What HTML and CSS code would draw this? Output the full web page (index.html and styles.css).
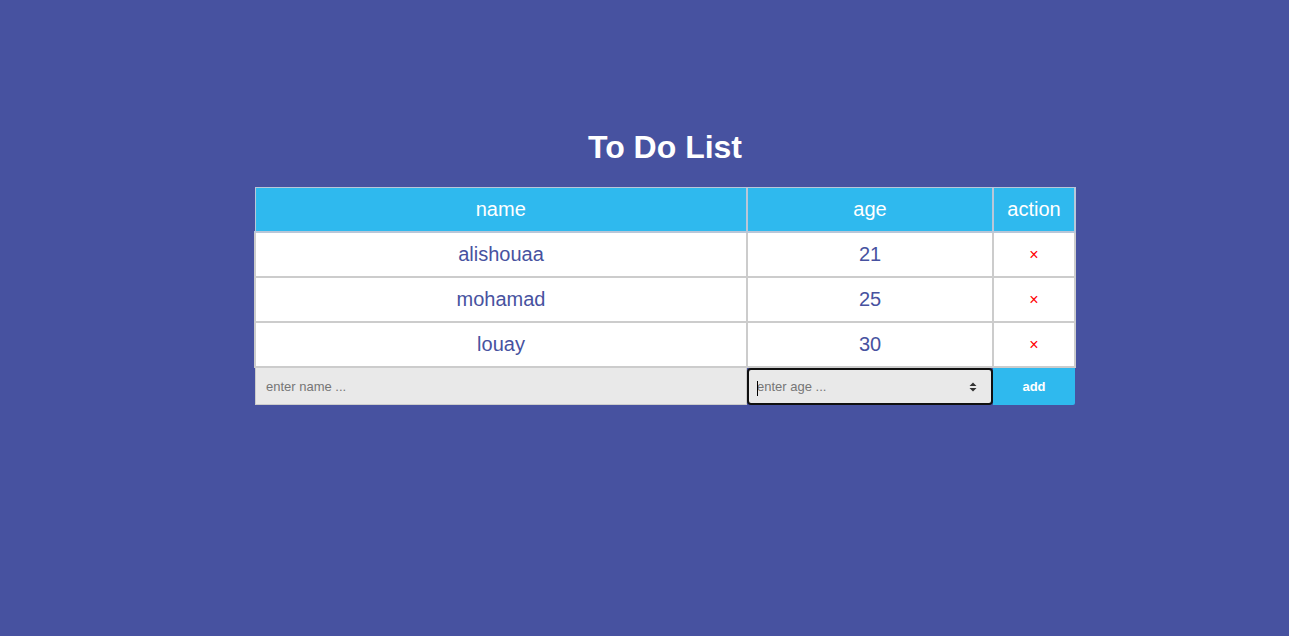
FILE: index.html
```html
<!DOCTYPE html>
<html>
<head>
<meta charset="utf-8">
<title>To Do List</title>
<link rel="stylesheet" href="styles.css">
</head>
<body>
<main class="page">
  <h1 class="title">To Do List</h1>
  <table class="list">
    <colgroup>
      <col class="col-name">
      <col class="col-age">
      <col class="col-action">
    </colgroup>
    <thead>
      <tr><th>name</th><th>age</th><th>action</th></tr>
    </thead>
    <tbody>
      <tr><td>alishouaa</td><td>21</td><td class="del">×</td></tr>
      <tr><td>mohamad</td><td>25</td><td class="del">×</td></tr>
      <tr><td>louay</td><td>30</td><td class="del">×</td></tr>
    </tbody>
  </table>
  <form class="add-row">
    <input class="name-input" type="text" placeholder="enter name ...">
    <div class="age-box">
      <span class="caret"></span>
      <input class="age-input" type="text" placeholder="enter age ...">
      <svg class="spin" width="8" height="10" viewBox="0 0 8 10"><path d="M4 0.5 L7.5 4 H0.5 Z M4 9.5 L7.5 6 H0.5 Z" fill="#333"/></svg>
    </div>
    <button class="add-btn" type="button">add</button>
  </form>
</main>
</body>
</html>
```
FILE: styles.css
```css
html, body {
  margin: 0;
  padding: 0;
  background: #4752a0;
  font-family: "Liberation Sans", Arial, sans-serif;
}
.page {
  display: flex;
  flex-direction: column;
  align-items: center;
  padding: 129px 0 0 41px;
}
.title {
  margin: 0 0 21px;
  font-size: 32px;
  line-height: 37px;
  font-weight: bold;
  color: #fff;
}
.list {
  width: 820px;
  border-collapse: collapse;
  table-layout: fixed;
}
.col-name { width: 492px; }
.col-age { width: 246px; }
.col-action { width: 82px; }
.list th, .list td {
  border: 2px solid #cccccc;
  height: 43px;
  padding: 0;
  text-align: center;
  font-size: 20px;
  font-weight: normal;
}
.list th {
  background: #2fb9ee;
  color: #fff;
  border-color: #b9c7d9;
  border-width: 1px 2px 2px 1px;
  height: 42px;
  padding-bottom: 1px;
}
.list td {
  background: #fff;
  color: #4752a0;
}
.list td.del {
  color: #ff0000;
  font-size: 16px;
}
.add-row {
  display: flex;
  width: 820px;
  height: 37px;
  margin: 0;
}
.name-input {
  box-sizing: border-box;
  width: 492px;
  height: 37px;
  margin: 0;
  border: 1px solid #cccccc;
  border-top: none;
  background: #e9e9e9;
  padding: 0 10px;
  font-family: "Liberation Sans", Arial, sans-serif;
  font-size: 13px;
  outline: none;
}
.name-input::placeholder, .age-input::placeholder {
  color: #767676;
}
.age-box {
  position: relative;
  box-sizing: border-box;
  width: 246px;
  height: 37px;
  border: 2px solid #101010;
  border-radius: 4px;
  background: #e9e9e9;
  display: flex;
  align-items: center;
}
.age-input {
  flex: 1;
  border: none;
  background: transparent;
  height: 100%;
  padding: 0 0 0 8px;
  font-family: "Liberation Sans", Arial, sans-serif;
  font-size: 13px;
  outline: none;
}
.caret {
  position: absolute;
  left: 8px;
  top: 11px;
  width: 1px;
  height: 15px;
  background: #000;
}
.spin {
  margin-right: 14px;
}
.add-btn {
  width: 82px;
  height: 37px;
  border: none;
  margin: 0;
  background: #2fb9ee;
  color: #fff;
  font-family: "Liberation Sans", Arial, sans-serif;
  font-size: 13px;
  font-weight: bold;
  border-radius: 0 0 2px 0;
}
```
